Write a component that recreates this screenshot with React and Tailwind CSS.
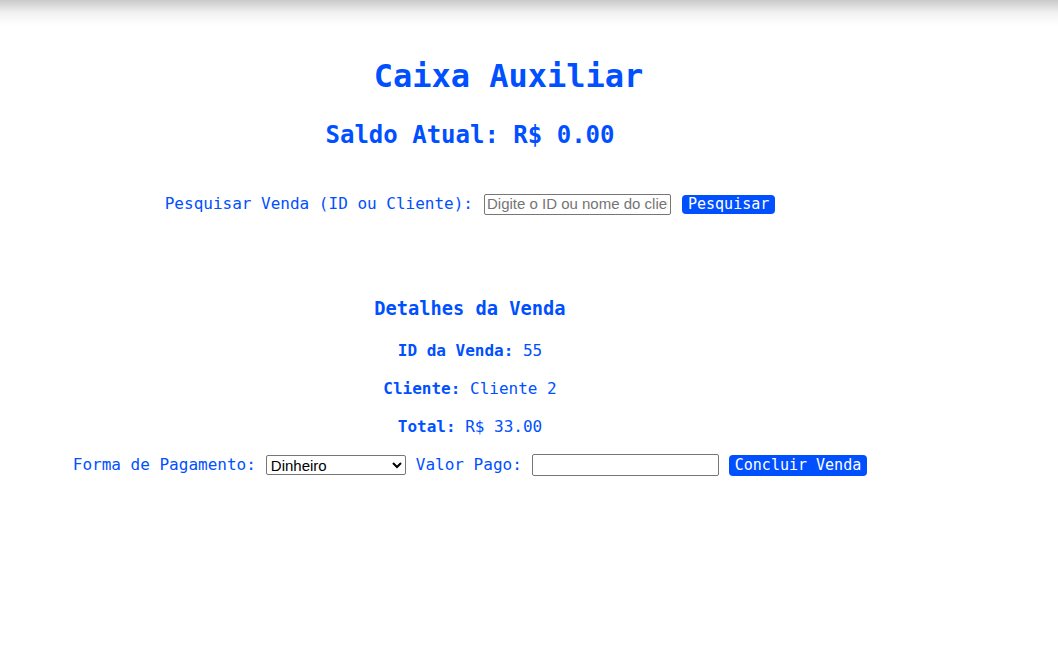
import React, { useState } from 'react';

const CaixaAuxiliar = () => {
  const [busca, setBusca] = useState('');
  const [forma, setForma] = useState('dinheiro');
  const [valorPago, setValorPago] = useState('');

  const venda = { id: 55, cliente: 'Cliente 2', total: 33 };

  return (
    <div className="min-h-screen bg-white font-['DejaVu_Sans_Mono',monospace] text-[#0050ff]">
      {/* sombra do topo */}
      <div className="h-[26px] bg-gradient-to-b from-[#c9c9c9] via-[#f2f2f2] to-white" />

      <div className="mt-[30px] flex h-[40px] w-[1017px] items-center justify-center">
        <h1 className="text-[32px] font-bold">Caixa Auxiliar</h1>
      </div>

      <div className="w-[940px]">
        <div className="mt-[23px] flex h-[32px] items-center justify-center">
          <h2 className="text-[24px] font-bold">Saldo Atual: R$ 0.00</h2>
        </div>

        {/* Pesquisa */}
        <div className="mt-[40px] flex h-[26px] items-center justify-center gap-[11px]">
          <label className="text-[16px]">Pesquisar Venda (ID ou Cliente):</label>
          <input
            type="text"
            value={busca}
            onChange={(e) => setBusca(e.target.value)}
            placeholder="Digite o ID ou nome do cliente"
            className="h-[21px] w-[187px] rounded-[2px] border border-[#767676] bg-white px-[2px] font-['Liberation_Sans',Arial,sans-serif] text-[15px] text-black placeholder:text-[#757575]"
          />
          <button className="h-[19px] rounded-[4px] bg-[#0050ff] px-[6px] text-[15px] leading-none text-white">
            Pesquisar
          </button>
        </div>

        {/* Detalhes */}
        <div className="mt-[80px] flex h-[24px] items-center justify-center">
          <h3 className="text-[18.7px] font-bold">Detalhes da Venda</h3>
        </div>
        <div className="mt-[18px] flex h-[24px] items-center justify-center text-[16px]">
          <p><strong>ID da Venda:</strong> {venda.id}</p>
        </div>
        <div className="mt-[14px] flex h-[24px] items-center justify-center text-[16px]">
          <p><strong>Cliente:</strong> {venda.cliente}</p>
        </div>
        <div className="mt-[14px] flex h-[24px] items-center justify-center text-[16px]">
          <p><strong>Total:</strong> R$ {venda.total.toFixed(2)}</p>
        </div>

        {/* Pagamento */}
        <div className="mt-[14px] flex h-[24px] items-center justify-center gap-[10px] text-[16px]">
          <label>Forma de Pagamento:</label>
          <select
            value={forma}
            onChange={(e) => setForma(e.target.value)}
            className="h-[20px] w-[140px] rounded-[2px] border border-[#767676] bg-white font-['Liberation_Sans',Arial,sans-serif] text-[15px] leading-none text-black"
          >
            <option value="dinheiro">Dinheiro</option>
            <option value="cartao">Cartão</option>
            <option value="pix">Pix</option>
          </select>
          <label>Valor Pago:</label>
          <input
            type="text"
            value={valorPago}
            onChange={(e) => setValorPago(e.target.value)}
            className="h-[22px] w-[187px] rounded-[2px] border border-[#767676] bg-white px-[2px] font-['Liberation_Sans',Arial,sans-serif] text-[15px] text-black"
          />
          <button className="h-[21px] rounded-[4px] bg-[#0050ff] px-[6px] text-[15px] leading-none text-white">
            Concluir Venda
          </button>
        </div>
      </div>
    </div>
  );
};

export default CaixaAuxiliar;
